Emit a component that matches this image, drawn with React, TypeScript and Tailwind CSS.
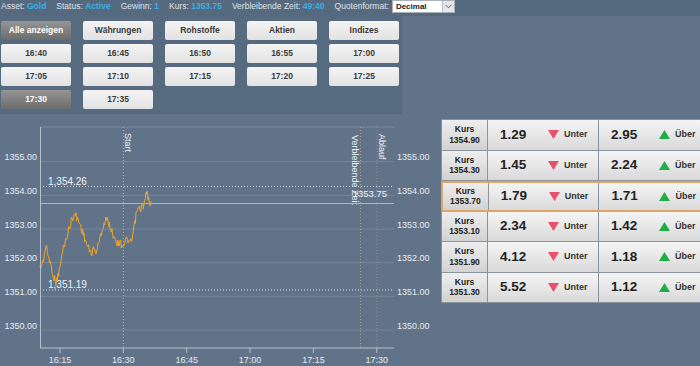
import React from 'react';

const font = { fontFamily: '"Liberation Sans", Arial, sans-serif' };

const buttons: { label: string; active?: boolean }[] = [
  { label: 'Alle anzeigen', active: true },
  { label: 'Währungen' },
  { label: 'Rohstoffe' },
  { label: 'Aktien' },
  { label: 'Indizes' },
  { label: '16:40' },
  { label: '16:45' },
  { label: '16:50' },
  { label: '16:55' },
  { label: '17:00' },
  { label: '17:05' },
  { label: '17:10' },
  { label: '17:15' },
  { label: '17:20' },
  { label: '17:25' },
  { label: '17:30', active: true },
  { label: '17:35' },
];

const rows = [
  { kurs: '1354.90', unter: '1.29', uber: '2.95' },
  { kurs: '1354.30', unter: '1.45', uber: '2.24' },
  { kurs: '1353.70', unter: '1.79', uber: '1.71', hl: true },
  { kurs: '1353.10', unter: '2.34', uber: '1.42' },
  { kurs: '1351.90', unter: '4.12', uber: '1.18' },
  { kurs: '1351.30', unter: '5.52', uber: '1.12' },
];

// waypoints of the price line, page coordinates
const wp: [number, number][] = [
  [40, 268], [42, 265], [44, 256], [46, 246], [48, 255], [50, 262], [52, 270], [54, 278],
  [56, 282], [58, 276], [60, 268], [62, 255], [64, 245], [66, 240], [68, 232], [70, 226],
  [72, 218], [74, 215], [76, 216], [78, 220], [80, 224], [82, 230], [84, 236], [86, 242],
  [88, 247], [90, 252], [92, 252], [94, 249], [96, 252], [98, 246], [100, 238], [102, 230],
  [104, 224], [106, 219], [108, 222], [110, 226], [112, 232], [114, 236], [116, 240],
  [118, 244], [120, 242], [122, 245], [124, 244], [126, 240], [128, 240], [130, 244],
  [132, 240], [134, 228], [136, 216], [138, 208], [140, 210], [142, 206], [144, 205],
  [146, 196], [147, 192], [148, 198], [150, 203], [151, 201],
];

function rnd(i: number) {
  const s = Math.sin(i * 12.9898 + 78.233) * 43758.5453;
  return s - Math.floor(s);
}

const pricePath = (() => {
  const pts: string[] = [];
  let k = 0;
  for (let i = 0; i < wp.length - 1; i++) {
    const [x0, y0] = wp[i];
    const [x1, y1] = wp[i + 1];
    const n = Math.max(2, Math.round((x1 - x0) / 0.8));
    for (let j = 0; j < n; j++) {
      const t = j / n;
      const y = y0 + (y1 - y0) * t + (rnd(k++) - 0.5) * 8;
      pts.push(`${(x0 + (x1 - x0) * t).toFixed(1)},${y.toFixed(1)}`);
    }
  }
  pts.push(`${wp[wp.length - 1][0]},${wp[wp.length - 1][1]}`);
  return 'M' + pts.join(' L');
})();

const grid = [1355, 1354, 1353, 1352, 1351, 1350].map((v, i) => ({ v, y: 161.7 + i * 33.66 }));
const times = ['16:15', '16:30', '16:45', '17:00', '17:15', '17:30'].map((t, i) => ({ t, x: 60 + i * 63.35 }));

function Chart() {
  return (
    <svg width="441" height="252" className="block">
      <g transform="translate(0,-114)" fontFamily='"Liberation Sans", Arial, sans-serif'>
        <line x1="40" y1="127" x2="394" y2="127" stroke="#7b8da1" />
        {grid.map((g) => (
          <g key={g.v}>
            <line x1="40" y1={g.y} x2="394" y2={g.y} stroke="#74879b" />
            <text x="37" y={g.y - 1.5} fontSize="9" fill="#e6ecf2" textAnchor="end">{g.v.toFixed(2)}</text>
            <text x="397" y={g.y - 1.5} fontSize="9" fill="#e6ecf2">{g.v.toFixed(2)}</text>
          </g>
        ))}
        {/* markers */}
        <line x1="123.4" y1="127" x2="123.4" y2="348" stroke="#86c2b0" strokeDasharray="1 2" />
        <line x1="360.5" y1="127" x2="360.5" y2="348" stroke="#b39a80" strokeDasharray="1 2" />
        <line x1="377" y1="127" x2="377" y2="348" stroke="#c47a8c" strokeDasharray="1 2" />
        <text transform="rotate(90 124.5 133)" x="124.5" y="133" fontSize="9" fill="#f0f3f6">Start</text>
        <text transform="rotate(90 352 135)" x="352" y="135" fontSize="9" fill="#f0f3f6">Verbleibende Zeit</text>
        <text transform="rotate(90 379 134)" x="379" y="134" fontSize="9" fill="#f0f3f6">Ablauf</text>

        <line x1="40" y1="186.5" x2="394" y2="186.5" stroke="#d3dbe4" strokeDasharray="1 2" />
        <line x1="40" y1="290" x2="394" y2="290" stroke="#d3dbe4" strokeDasharray="1 2" />
        <line x1="40" y1="203.5" x2="394" y2="203.5" stroke="#a9b7c6" />
        <text x="48" y="185" fontSize="10" fill="#eef2f6">1,354.26</text>
        <text x="48" y="288" fontSize="10" fill="#eef2f6">1,351.19</text>
        <text x="387" y="197" fontSize="9.5" fill="#eef2f6" textAnchor="end">1353.75</text>

        <path d={pricePath} fill="none" stroke="#f2a424" strokeWidth="1" strokeLinejoin="miter" />

        <line x1="40.5" y1="127" x2="40.5" y2="348" stroke="#b4c1ce" />
        <line x1="40" y1="348" x2="394" y2="348" stroke="#b4c1ce" />
        {times.map((t) => (
          <g key={t.t}>
            <line x1={t.x} y1="348" x2={t.x} y2="353" stroke="#b4c1ce" />
            <text x={t.x} y="363" fontSize="9" fill="#e6ecf2" textAnchor="middle">{t.t}</text>
          </g>
        ))}
      </g>
    </svg>
  );
}

function Down() {
  return (
    <svg width="11" height="9" className="shrink-0">
      <polygon points="0,0 11,0 5.5,9" fill="#e9506b" />
    </svg>
  );
}

function Up() {
  return (
    <svg width="11" height="9" className="shrink-0">
      <polygon points="0,9 11,9 5.5,0" fill="#1fae45" />
    </svg>
  );
}

function OddsCell({ value, label, up }: { value: string; label: string; up?: boolean }) {
  return (
    <div className="w-[111px] h-full flex items-center pl-[12px] bg-gradient-to-b from-[#f5f5f5] to-[#d9d9d9] border-l border-[#8b939c]">
      <span className="w-[48px] text-[13.5px] font-bold text-[#222]">{value}</span>
      {up ? <Up /> : <Down />}
      <span className="ml-[5px] text-[9px] font-bold text-[#333]">{label}</span>
    </div>
  );
}

export default function App() {
  return (
    <div className="w-[700px] h-[366px] overflow-hidden bg-[#617389]" style={font}>
      {/* top bar */}
      <div className="h-[16px] bg-[#566a7f] flex items-start pl-[1px] text-[8.5px] text-[#dce3ea] whitespace-nowrap">
        <div className="flex items-center h-[13px] gap-[10px]">
          <span>Asset: <b className="text-[8.5px] text-[#3aaee6]">Gold</b></span>
          <span>Status: <b className="text-[8.5px] text-[#3aaee6]">Active</b></span>
          <span>Gewinn: <b className="text-[8.5px] text-[#3aaee6]">1</b></span>
          <span>Kurs: <b className="text-[8.5px] text-[#3aaee6]">1353.75</b></span>
          <span>Verbleibende Zeit: <b className="text-[8.5px] text-[#3aaee6]">49:40</b></span>
          <span>Quotenformat:</span>
        </div>
        <div className="ml-[3px] w-[63px] h-[13px] bg-white border border-[#a9b0b8] flex items-center">
          <span className="flex-1 pl-[3px] text-[8px] font-bold text-[#222]">Decimal</span>
          <span className="w-[12px] h-full bg-[#e4e6e9] border-l border-[#b8bec5] flex items-center justify-center">
            <svg width="7" height="5"><path d="M0.5 0.8 L3.5 3.8 L6.5 0.8" fill="none" stroke="#666" strokeWidth="1" /></svg>
          </span>
        </div>
      </div>

      <div className="flex">
        <div className="w-[441px] shrink-0 flex flex-col">
          <div className="w-[402px] h-[98px] bg-[#566a80] pt-[5px] pl-[1px]">
            <div className="grid grid-cols-[repeat(5,70px)] auto-rows-[19px] gap-x-[12px] gap-y-[4px]">
              {buttons.map((b) => (
                <div
                  key={b.label}
                  className={
                    b.active
                      ? 'rounded-[2px] flex items-center justify-center text-[8.5px] font-bold text-white bg-gradient-to-b from-[#959595] to-[#6c6c6c]'
                      : 'rounded-[2px] flex items-center justify-center text-[8.5px] font-bold text-[#3a3a3a] bg-gradient-to-b from-[#f4f4f4] to-[#e2e2e2]'
                  }
                >
                  {b.label}
                </div>
              ))}
            </div>
          </div>
          <Chart />
        </div>

        <div className="pt-[103px]">
          <div className="w-[270px] border-l border-t border-[#8b939c] bg-[#8b939c]">
            {rows.map((r) => (
              <div
                key={r.kurs}
                className={
                  r.hl
                    ? 'h-[30.5px] flex border-2 border-[#e0a466] -ml-[1px]'
                    : 'h-[30.5px] flex border-b border-[#8b939c]'
                }
              >
                <div className="w-[45px] h-full flex flex-col items-center justify-center text-[8.5px] font-bold leading-[10.5px] text-[#222] bg-gradient-to-b from-[#eeeeee] to-[#d2d2d2]">
                  <span>Kurs</span>
                  <span>{r.kurs}</span>
                </div>
                <OddsCell value={r.unter} label="Unter" />
                <OddsCell value={r.uber} label="Über" up />
              </div>
            ))}
          </div>
        </div>
      </div>
    </div>
  );
}
